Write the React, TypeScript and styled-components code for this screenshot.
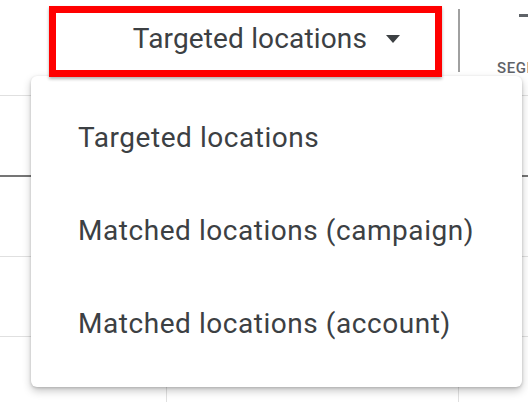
import React from "react";
import styled, { createGlobalStyle } from "styled-components";

const Global = createGlobalStyle`
  html, body { margin: 0; padding: 0; background: #ffffff; }
  body { font-family: Roboto, "Noto Sans", Arial, sans-serif; }
`;

const Page = styled.div`
  position: relative;
  width: 528px;
  height: 402px;
  overflow: hidden;
  background: #ffffff;
`;

const Toolbar = styled.div`
  display: flex;
  align-items: flex-start;
  height: 96px;
  border-bottom: 1px solid #e0e0e0;
  box-sizing: border-box;
`;

const Highlight = styled.div`
  position: relative;
  z-index: 3;
  flex: none;
  margin: 6px 0 0 49px;
  width: 393px;
  height: 71px;
  box-sizing: border-box;
  border: 7px solid #ff0000;
  box-shadow: 0 2px 3px rgba(0, 0, 0, 0.3);
  background: #ffffff;
`;

const SelectButton = styled.div`
  display: flex;
  align-items: center;
  justify-content: flex-end;
  gap: 19px;
  height: 100%;
  padding: 0 35px 6px 0;
  box-sizing: border-box;
  font-size: 28px;
  color: #3c4043;
  letter-spacing: 0.15px;
  white-space: nowrap;
`;

const Separator = styled.div`
  flex: none;
  width: 2px;
  height: 63px;
  margin: 9px 0 0 16px;
  background: #a0a0a0;
`;

const SegmentCol = styled.div`
  display: flex;
  flex: none;
  flex-direction: column;
  align-items: flex-start;
  margin-left: 37px;
  padding-top: 14px;
`;

const SegmentIcon = styled.div`
  width: 12px;
  height: 3px;
  margin-left: 22px;
  background: #5f6368;
`;

const SegmentLabel = styled.div`
  margin-top: 42px;
  font-size: 15px;
  font-weight: 500;
  letter-spacing: 0.6px;
  color: #5f6368;
  white-space: nowrap;
`;

const HeaderRow = styled.div`
  height: 81px;
  border-bottom: 2px solid #757575;
  box-sizing: border-box;
`;

const Row = styled.div`
  display: grid;
  grid-template-columns: 167px 292px 1fr;
  height: 80px;
  border-bottom: 1px solid #e0e0e0;
  box-sizing: border-box;
`;

const Cell = styled.div`
  border-right: 1px solid #e0e0e0;
  &:last-child { border-right: none; }
`;

const Menu = styled.div`
  position: absolute;
  z-index: 2;
  left: 31px;
  top: 76px;
  width: 491px;
  height: 311px;
  box-sizing: border-box;
  padding: 15px 0 17px;
  background: #ffffff;
  border-radius: 6px;
  box-shadow: 0 4px 8px rgba(0, 0, 0, 0.22), 0 1px 3px rgba(0, 0, 0, 0.18);
`;

const MenuItem = styled.div`
  display: flex;
  align-items: center;
  height: 93px;
  padding-left: 47px;
  font-size: 28px;
  color: #3c4043;
  letter-spacing: 0.55px;
  white-space: nowrap;
`;

const Caret = () => (
  <svg width="14" height="8" viewBox="0 0 14 8" aria-hidden="true">
    <path d="M0 0 L14 0 L7 8 Z" fill="#3c4043" />
  </svg>
);

export default function App() {
  const items = [
    "Targeted locations",
    "Matched locations (campaign)",
    "Matched locations (account)",
  ];
  return (
    <Page>
      <Global />
      <Toolbar>
        <Highlight>
          <SelectButton>
            <span>Targeted locations</span>
            <Caret />
          </SelectButton>
        </Highlight>
        <Separator />
        <SegmentCol>
          <SegmentIcon />
          <SegmentLabel>SEGMENT</SegmentLabel>
        </SegmentCol>
      </Toolbar>
      <HeaderRow />
      {[0, 1, 2].map((i) => (
        <Row key={i}>
          <Cell />
          <Cell />
          <Cell />
        </Row>
      ))}
      <Menu>
        {items.map((t) => (
          <MenuItem key={t}>{t}</MenuItem>
        ))}
      </Menu>
    </Page>
  );
}
